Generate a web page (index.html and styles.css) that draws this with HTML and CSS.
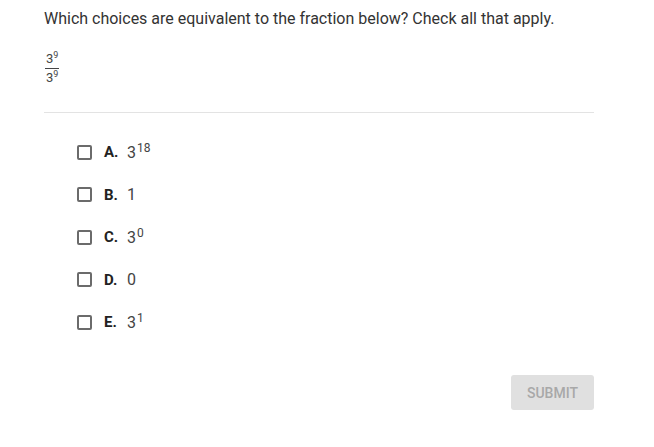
FILE: index.html
```html
<!DOCTYPE html>
<html>
<head>
<meta charset="utf-8">
<link rel="stylesheet" href="styles.css">
</head>
<body>
<div class="page">
  <p class="question">Which choices are equivalent to the fraction below? Check all that apply.</p>
  <div class="fraction">
    <span class="num">3<sup>9</sup></span>
    <span class="den">3<sup>9</sup></span>
  </div>
  <hr class="rule">
  <ul class="choices">
    <li class="choice"><span class="box"></span><span class="letter">A.</span><span class="value">3<sup>18</sup></span></li>
    <li class="choice"><span class="box"></span><span class="letter">B.</span><span class="value">1</span></li>
    <li class="choice"><span class="box"></span><span class="letter">C.</span><span class="value">3<sup>0</sup></span></li>
    <li class="choice"><span class="box"></span><span class="letter">D.</span><span class="value">0</span></li>
    <li class="choice"><span class="box"></span><span class="letter">E.</span><span class="value">3<sup>1</sup></span></li>
  </ul>
  <div class="actions">
    <button class="submit">SUBMIT</button>
  </div>
</div>
</body>
</html>
```
FILE: styles.css
```css
html, body {
  margin: 0;
  padding: 0;
  background: #ffffff;
}
body {
  font-family: Roboto, "Liberation Sans", sans-serif;
  color: #333333;
}
.page {
  width: 550px;
  padding: 10px 0 0 44px;
}
.question {
  margin: 0;
  font-size: 16px;
  line-height: 18px;
  color: #333333;
}
.fraction {
  display: inline-flex;
  flex-direction: column;
  align-items: center;
  margin: 24px 0 0 1px;
  font-size: 13px;
  line-height: 14px;
  color: #444;
}
.fraction sup {
  font-size: 9px;
  vertical-align: 5px;
  line-height: 0;
}
.num {
  padding: 0 1px 2px;
  border-bottom: 1px solid #444;
}
.den {
  padding-top: 2px;
}
.rule {
  margin: 27px 0 0 0;
  border: 0;
  border-top: 1px solid #e3e3e3;
  height: 0;
}
.choices {
  list-style: none;
  margin: 0;
  padding: 30px 0 0 33px;
  display: flex;
  flex-direction: column;
  gap: 24.5px;
}
.choice {
  display: flex;
  align-items: center;
  height: 18px;
}
.box {
  width: 11px;
  height: 11px;
  border: 2px solid #6b6b6b;
  border-radius: 2px;
  margin-right: 12px;
}
.letter {
  font-weight: 700;
  font-size: 15px;
  color: #222;
  width: 23px;
}
.value {
  font-size: 16px;
  color: #444;
}
.value sup {
  font-size: 12px;
  vertical-align: 6px;
  line-height: 0;
  margin-left: 1px;
}
.actions {
  display: flex;
  justify-content: flex-end;
  margin-top: 44px;
}
.submit {
  width: 83px;
  height: 35px;
  border: 0;
  border-radius: 3px;
  background: #e0e0e0;
  color: #a8a8a8;
  font-family: Roboto, "Liberation Sans", sans-serif;
  font-size: 14px;
  font-weight: 500;
  padding: 0;
}
```
